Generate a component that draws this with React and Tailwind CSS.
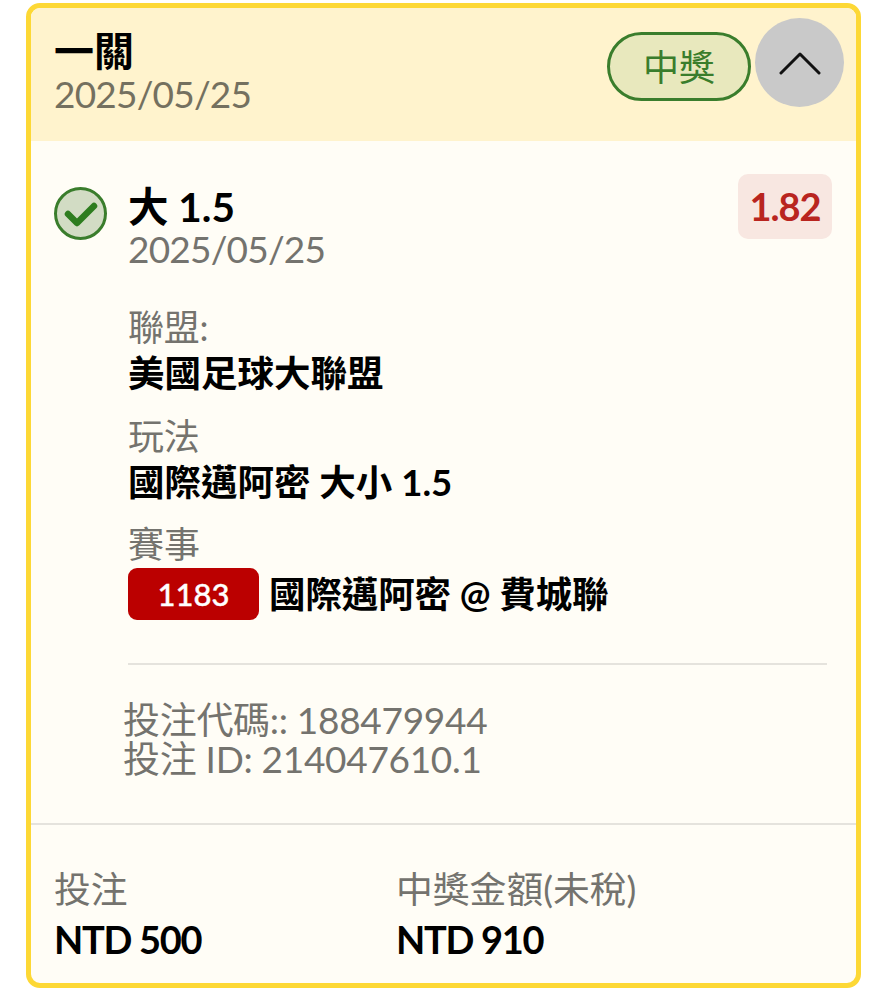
import React from "react";

const font = { fontFamily: '"Lato", "Noto Sans CJK TC", sans-serif' };

function Field({ label, value, className }) {
  return (
    <div className={className}>
      <div className="text-[36px] leading-[46px] tracking-[-0.2px] text-[#74736e]">{label}</div>
      <div className="text-[36.5px] leading-[46px] font-bold text-black">{value}</div>
    </div>
  );
}

export default function App() {
  return (
    <div className="min-h-[1000px] bg-white pt-[3px] pl-[26px]" style={font}>
      <div className="w-[835px] h-[985px] flex flex-col overflow-hidden rounded-[14px] border-[5px] border-[#fdd835] bg-[#fffdf6]">
        <div className="h-[133px] shrink-0 flex justify-between bg-[#fff3cd] pl-[23px] pr-[12px] pt-[14px]">
          <div>
            <div className="text-[40px] leading-[50px] font-bold text-black mt-[4px]">一關</div>
            <div className="text-[37px] leading-[36px] tracking-[-0.8px] text-[#74705f]">2025/05/25</div>
          </div>
          <div className="flex items-start -mt-[4px]">
            <div className="mt-[14px] mr-[4px] w-[144px] h-[69px] flex items-center justify-center rounded-full border-[3px] border-[#3a7d2c] bg-[#e8e8bd] text-[36px] text-[#3a7d2c]">
              中獎
            </div>
            <div className="w-[89px] h-[89px] rounded-full bg-[#c9c9c9] flex items-center justify-center">
              <svg width="42" height="24" viewBox="0 0 42 24" fill="none">
                <path d="M2 22 L21 3 L40 22" stroke="#111" strokeWidth="3" strokeLinecap="round" strokeLinejoin="round" />
              </svg>
            </div>
          </div>
        </div>

        <div className="flex-1 flex flex-col pt-[33px] pl-[23px] pr-[24px]">
          <div className="flex items-start">
            <div className="mt-[13px] w-[53px] h-[53px] shrink-0 rounded-full border-[3px] border-[#3a7d2c] bg-[#d2dcc4] flex items-center justify-center">
              <svg width="34" height="28" viewBox="0 0 34 28" fill="none">
                <path d="M4 14 L13 23 L30 6" stroke="#2e7d1f" strokeWidth="6.5" strokeLinecap="round" strokeLinejoin="round" />
              </svg>
            </div>
            <div className="ml-[21px] flex-1 pt-[10px]">
              <div className="text-[40.5px] leading-[46px] font-bold text-black">大 1.5</div>
              <div className="text-[37px] leading-[38px] tracking-[-0.8px] text-[#74736e]">2025/05/25</div>
            </div>
            <div className="w-[94px] h-[65px] rounded-[10px] bg-[#f8e7e1] flex items-center justify-center text-[38px] tracking-[-1px] font-bold text-[#b9251f]">
              1.82
            </div>
          </div>

          <div className="ml-[74px] mt-[36px]">
            <Field className="mb-[17px]" label="聯盟:" value="美國足球大聯盟" />
            <Field className="mb-[16px]" label="玩法" value="國際邁阿密 大小 1.5" />
            <div className="text-[36px] leading-[46px] text-[#74736e]">賽事</div>
            <div className="flex items-center">
              <div className="w-[131px] h-[52px] rounded-[9px] bg-[#bb0000] flex items-center justify-center text-[31px] font-medium [-webkit-text-stroke:0.4px_white] text-white">
                1183
              </div>
              <div className="ml-[10px] text-[36.5px] tracking-[-0.1px] font-bold text-black">國際邁阿密 @ 費城聯</div>
            </div>
            <div className="mt-[41px] w-[699px] h-[2px] bg-[#e5e3dd]" />
          </div>

          <div className="ml-[69px] mt-[35px] text-[37px] leading-[39px] tracking-[-0.3px] text-[#74736e]">
            <div>投注代碼:: 188479944</div>
            <div>投注 ID: 214047610.1</div>
          </div>
        </div>

        <div className="h-[160px] shrink-0 border-t-2 border-[#e5e3dd] flex pl-[23px] pt-[41px]">
          <div className="w-[342px]">
            <div className="text-[36.8px] leading-[46px] text-[#74736e]">投注</div>
            <div className="text-[38px] leading-[54px] tracking-[-1.3px] font-bold text-black">NTD 500</div>
          </div>
          <div>
            <div className="text-[36.8px] leading-[46px] text-[#74736e]">中獎金額(未稅)</div>
            <div className="text-[38px] leading-[54px] tracking-[-1.3px] font-bold text-black">NTD 910</div>
          </div>
        </div>
      </div>
    </div>
  );
}
